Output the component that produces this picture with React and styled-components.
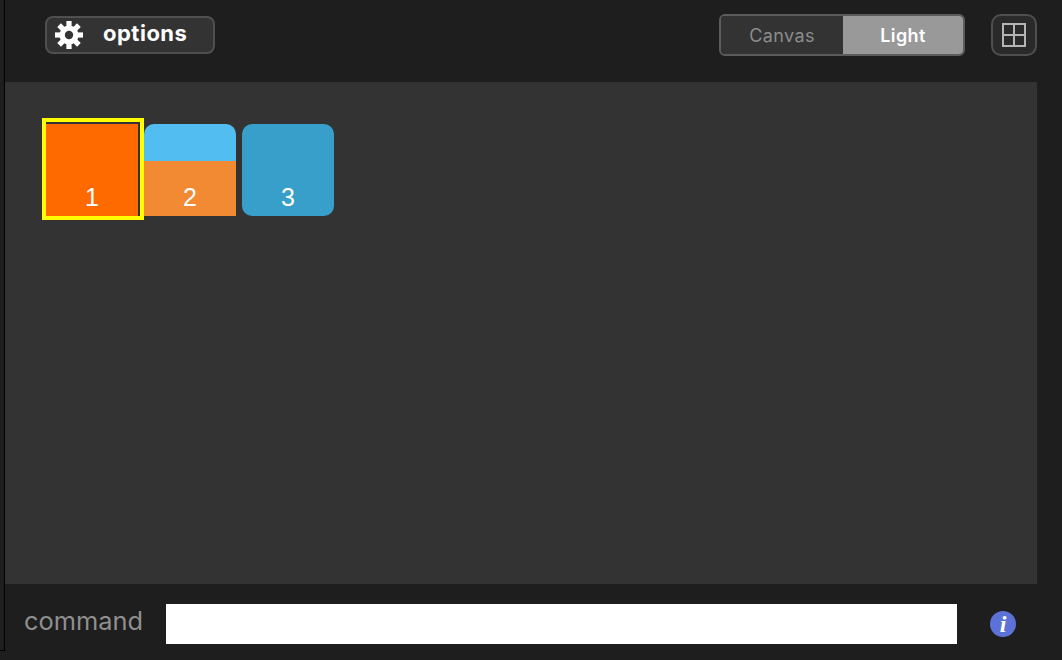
import styled, { createGlobalStyle } from 'styled-components';

const GlobalStyle = createGlobalStyle`
	html, body {
		margin: 0;
		padding: 0;
		background: #1e1e1e;
	}
	* {
		box-sizing: border-box;
	}
`;

const Page = styled.div`
	position: relative;
	width: 1062px;
	height: 660px;
	display: flex;
	flex-direction: column;
	overflow: hidden;
	background: #1e1e1e;
	font-family: Inter, 'Liberation Sans', sans-serif;
	&::before {
		content: '';
		position: absolute;
		left: 0;
		top: 0;
		width: 4px;
		height: 650px;
		border-right: 1px solid #000;
		border-bottom: 1px solid #000;
	}
`;

const Header = styled.header`
	height: 82px;
	flex: none;
	display: flex;
	align-items: flex-start;
	justify-content: space-between;
	padding: 14px 25px 0 45px;
`;

const OptionsButton = styled.button`
	width: 170px;
	height: 38px;
	margin-top: 2px;
	padding: 0 0 0 7px;
	display: flex;
	align-items: center;
	gap: 19px;
	background: #333;
	border: 2px solid #4f4f4f;
	border-radius: 8px;
	color: #fff;
	font-family: inherit;
	font-size: 22px;
	font-weight: 700;
	letter-spacing: 0.5px;
`;

const OptionsLabel = styled.span`
	margin-top: -4px;
`;

const HeaderRight = styled.div`
	display: flex;
	gap: 26px;
`;

const Segmented = styled.div`
	width: 246px;
	height: 42px;
	display: flex;
	border: 2px solid #5c5c5c;
	border-radius: 6px;
	overflow: hidden;
`;

const Segment = styled.div`
	width: ${(p) => (p.$active ? '120px' : '122px')};
	display: flex;
	align-items: center;
	justify-content: center;
	font-size: 18px;
	letter-spacing: 0.4px;
	font-weight: ${(p) => (p.$active ? 600 : 400)};
	color: ${(p) => (p.$active ? '#fff' : '#8c8c8c')};
	background: ${(p) => (p.$active ? '#999' : '#333')};
`;

const LayoutButton = styled.button`
	width: 46px;
	height: 42px;
	padding: 0;
	display: flex;
	align-items: center;
	justify-content: center;
	background: #2a2a2a;
	border: 2px solid #4f4f4f;
	border-radius: 10px;
`;

const Main = styled.main`
	flex: 1;
	margin: 0 25px 0 4px;
	padding: 42px 0 0 42px;
	background: #333;
`;

const Swatches = styled.div`
	display: flex;
	gap: 6px;
`;

const Swatch = styled.div`
	position: relative;
	width: 92px;
	height: 92px;
	display: flex;
	align-items: flex-end;
	justify-content: center;
	padding-bottom: 5px;
	color: #fff;
	font-family: 'Liberation Sans', Arial, sans-serif;
	font-size: 25px;
	line-height: 28px;
	background: ${(p) => p.$background};
	border-radius: ${(p) => p.$radius};
`;

const Selection = styled.div`
	position: absolute;
	left: -4px;
	top: -6px;
	right: -6px;
	bottom: -4px;
	border: 4px solid #ffff00;
`;

const Footer = styled.footer`
	height: 76px;
	flex: none;
	display: flex;
	align-items: flex-start;
	padding: 20px 0 0 24px;
`;

const CommandLabel = styled.label`
	width: 142px;
	flex: none;
	color: #8f8f8f;
	font-size: 25.4px;
	line-height: 34px;
`;

const CommandInput = styled.input`
	width: 791px;
	height: 40px;
	flex: none;
	border: none;
	padding: 0 8px;
	background: #fff;
`;

const InfoBadge = styled.div`
	width: 26px;
	height: 26px;
	margin: 7px 0 0 33px;
	flex: none;
	display: flex;
	align-items: center;
	justify-content: center;
	border-radius: 50%;
	background: #5d72d6;
	color: #fff;
	font-family: 'Liberation Serif', serif;
	font-size: 24px;
	font-style: italic;
	font-weight: 700;
	line-height: 26px;
`;

const GearIcon = () => (
	<svg width="30" height="30" viewBox="0 0 30 30">
		{[0, 45, 90, 135].map((angle) => (
			<rect key={angle} x="12.4" y="1" width="5.2" height="28" fill="#fff" transform={`rotate(${angle} 15 15)`} />
		))}
		<circle cx="15" cy="15" r="9.5" fill="#fff" />
		<circle cx="15" cy="15" r="4.2" fill="#333" />
	</svg>
);

const GridIcon = () => (
	<svg width="26" height="26" viewBox="0 0 26 26" fill="none" stroke="#b5b5b5" strokeWidth="2">
		<rect x="2" y="2" width="22" height="22" />
		<path d="M13 2V24M2 13H24" />
	</svg>
);

export default function App() {
	return (
		<Page>
			<GlobalStyle />
			<Header>
				<OptionsButton>
					<GearIcon />
					<OptionsLabel>options</OptionsLabel>
				</OptionsButton>
				<HeaderRight>
					<Segmented>
						<Segment>Canvas</Segment>
						<Segment $active>Light</Segment>
					</Segmented>
					<LayoutButton>
						<GridIcon />
					</LayoutButton>
				</HeaderRight>
			</Header>
			<Main>
				<Swatches>
					<Swatch $background="#ff6a00" $radius="0">
						1
						<Selection />
					</Swatch>
					<Swatch $background="linear-gradient(#52bdf0 0 37px, #f18a33 37px)" $radius="10px 10px 0 0">
						2
					</Swatch>
					<Swatch $background="#379fc9" $radius="10px">
						3
					</Swatch>
				</Swatches>
			</Main>
			<Footer>
				<CommandLabel>command</CommandLabel>
				<CommandInput />
				<InfoBadge>i</InfoBadge>
			</Footer>
		</Page>
	);
}
